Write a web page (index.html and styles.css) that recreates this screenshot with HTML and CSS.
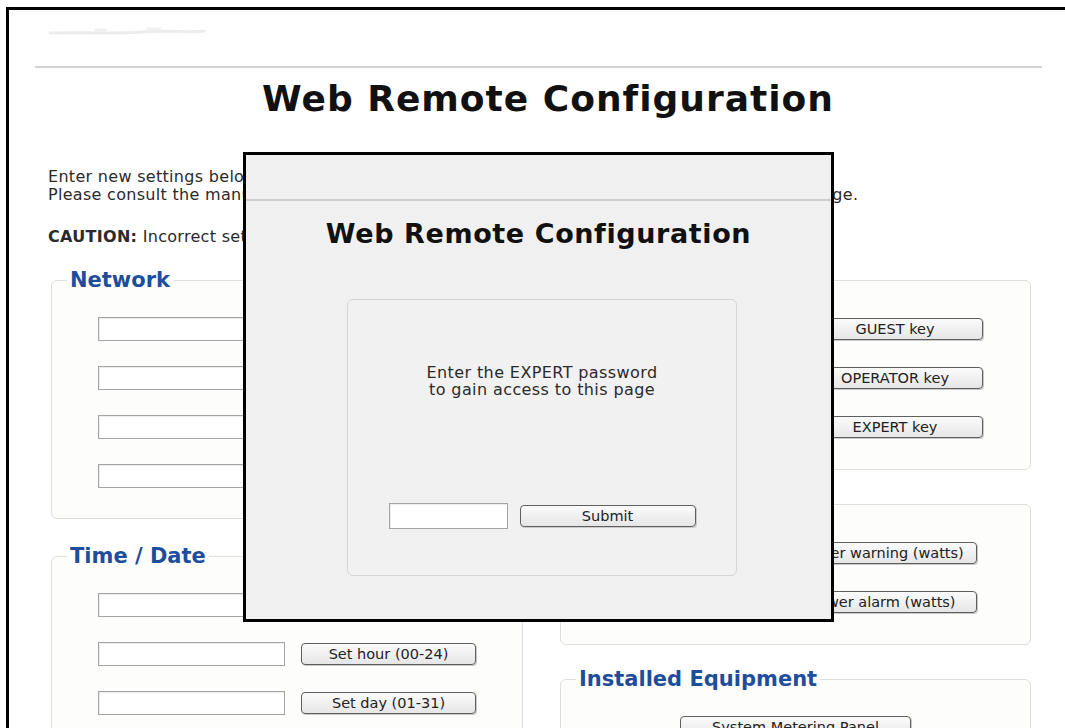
FILE: index.html
```html
<!DOCTYPE html>
<html lang="en">
<head>
<meta charset="utf-8">
<title>Web Remote Configuration</title>
<link rel="stylesheet" href="styles.css">
</head>
<body>
<div class="frame">
  <div class="brand">
    <svg width="160" height="12" viewBox="0 0 160 12" aria-hidden="true">
      <path d="M2 8 C 30 7, 60 9, 95 7 S 140 8, 156 6" fill="none" stroke="#ececec" stroke-width="3" stroke-linecap="round"/>
      <path d="M48 5 L 58 5 M 100 4 L 112 4" fill="none" stroke="#f1f1f1" stroke-width="3" stroke-linecap="round"/>
    </svg>
  </div>
  <hr class="rule">
  <h1 class="title">Web Remote Configuration</h1>

  <div class="intro">
    <p>Enter new settings below and press the matching button to apply each one.<br>
    <span class="nowrap">Please consult the manual for details before making further changes to the settings on this page.</span></p>
    <p><b>CAUTION:</b> Incorrect settings may cause the system to stop responding.</p>
  </div>

  <div class="columns">
    <div class="col col-left">
      <fieldset class="group">
        <legend>Network</legend>
        <div class="row"><input class="field" type="text"><button class="btn" type="button">Set IP address</button></div>
        <div class="row"><input class="field" type="text"><button class="btn" type="button">Set subnet mask</button></div>
        <div class="row"><input class="field" type="text"><button class="btn" type="button">Set gateway</button></div>
        <div class="row"><input class="field" type="text"><button class="btn" type="button">Set DNS server</button></div>
      </fieldset>
      <fieldset class="group">
        <legend>Time / Date</legend>
        <div class="row"><input class="field" type="text"><button class="btn" type="button">Set minute (00-59)</button></div>
        <div class="row"><input class="field" type="text"><button class="btn" type="button">Set hour (00-24)</button></div>
        <div class="row"><input class="field" type="text"><button class="btn" type="button">Set day (01-31)</button></div>
        <div class="row"><input class="field" type="text"><button class="btn" type="button">Set month (01-12)</button></div>
      </fieldset>
    </div>

    <div class="col">
      <fieldset class="group group-keys">
        <legend>Access Keys</legend>
        <div class="row"><input class="field" type="password"><button class="btn" type="button">GUEST key</button></div>
        <div class="row"><input class="field" type="password"><button class="btn" type="button">OPERATOR key</button></div>
        <div class="row"><input class="field" type="password"><button class="btn" type="button">EXPERT key</button></div>
      </fieldset>
      <fieldset class="group">
        <legend>Power Limits</legend>
        <div class="row"><input class="field field-short" type="text"><button class="btn btn-wide" type="button">Set power warning (watts)</button></div>
        <div class="row"><input class="field field-short" type="text"><button class="btn btn-wide" type="button">Set power alarm (watts)</button></div>
      </fieldset>
      <fieldset class="group">
        <legend>Installed Equipment</legend>
        <div class="row"><button class="btn btn-panel" type="button">System Metering Panel</button></div>
      </fieldset>
    </div>
  </div>

  <div class="modal">
    <hr class="modal-rule">
    <h2 class="modal-title">Web Remote Configuration</h2>
    <div class="login">
      <p class="login-text">Enter the EXPERT password<br>to gain access to this page</p>
      <div class="login-row">
        <input class="login-field" type="password">
        <button class="btn login-btn" type="button">Submit</button>
      </div>
    </div>
  </div>
</div>
</body>
</html>
```

FILE: styles.css
```css
html, body {
  margin: 0;
  padding: 0;
  background: #fff;
  overflow: hidden;
}

body {
  font-family: "DejaVu Sans", Verdana, sans-serif;
  color: #222;
}

.frame {
  position: relative;
  margin: 7px 0 0 6px;
  border-top: 3px solid #000;
  border-left: 3px solid #000;
  height: 718px;
  overflow: hidden;
}

.brand {
  margin: 15px 0 0 39px;
  height: 12px;
}

.brand svg {
  display: block;
}

.rule {
  margin: 29px 0 0 26px;
  width: 1007px;
  height: 2px;
  border: 0;
  background: #d2d2d2;
}

.title {
  margin: 11px 0 0;
  padding-left: 22px;
  font-size: 36px;
  line-height: 40px;
  font-weight: bold;
  letter-spacing: 1px;
  text-align: center;
  color: #111;
}

.intro {
  margin: 49px 0 0 39px;
  font-size: 16px;
  line-height: 18px;
  letter-spacing: 0.3px;
  color: #2a2a2a;
}

.intro p {
  margin: 0;
}

.intro p + p {
  margin-top: 24px;
}

.nowrap {
  white-space: nowrap;
}

.columns {
  display: grid;
  grid-template-columns: 472px 471px;
  column-gap: 37px;
  margin: 22px 0 0 42px;
}

.col {
  display: flex;
  flex-direction: column;
  gap: 22px;
}

.col-left {
  gap: 25px;
}

.group {
  box-sizing: border-box;
  width: 100%;
  min-inline-size: 0;
  margin: 0;
  padding: 25px 0 30px;
  border: 1px solid #dededb;
  border-radius: 6px;
  background: #fdfdfb;
}

.group-keys {
  padding-right: 4px;
}

.group legend {
  margin-left: 15px;
  padding: 0 3px;
  font-size: 21px;
  line-height: 24px;
  font-weight: bold;
  color: #1d4e9c;
}

.row {
  display: flex;
  justify-content: center;
  align-items: center;
  gap: 16px;
}

.row + .row {
  margin-top: 25px;
}

.field {
  box-sizing: border-box;
  width: 187px;
  height: 24px;
  margin: 0;
  border: 1px solid #a4a4a4;
  box-shadow: inset 1px 1px 0 #ececec;
  background: #fff;
}

.field-short {
  width: 122px;
}

.btn {
  box-sizing: border-box;
  width: 175px;
  height: 22px;
  margin: 0;
  padding: 0;
  border: 1px solid #5f5f5f;
  border-radius: 4px;
  background: linear-gradient(#fbfbfb, #e6e6e6);
  box-shadow: 1px 1px 0 #c9c9c9;
  font-family: "DejaVu Sans", Verdana, sans-serif;
  font-size: 14.5px;
  white-space: nowrap;
  color: #222;
}

.btn-wide {
  width: 225px;
  padding-left: 7px;
}

.btn-panel {
  width: 231px;
}

.modal {
  position: absolute;
  left: 234px;
  top: 142px;
  width: 591px;
  height: 470px;
  box-sizing: border-box;
  border: 3px solid #000;
  background: #f0f0f0;
}

.modal-rule {
  margin: 44px 0 0;
  height: 2px;
  border: 0;
  background: #cdcdcd;
}

.modal-title {
  margin: 17px 0 0;
  font-size: 27px;
  line-height: 32px;
  font-weight: bold;
  letter-spacing: 0.6px;
  text-align: center;
  color: #111;
}

.login {
  box-sizing: border-box;
  width: 390px;
  height: 277px;
  margin: 49px 0 0 101px;
  padding-top: 64px;
  border: 1px solid #d6d6d6;
  border-radius: 6px;
  background: #f1f1f1;
}

.login-text {
  margin: 0;
  font-size: 16px;
  line-height: 17px;
  letter-spacing: 0.4px;
  text-align: center;
  color: #2a2a2a;
}

.login-row {
  display: flex;
  justify-content: center;
  align-items: center;
  gap: 12px;
  margin-top: 105px;
}

.login-field {
  box-sizing: border-box;
  width: 119px;
  height: 26px;
  margin: 0;
  border: 1px solid #a4a4a4;
  box-shadow: inset 1px 1px 0 #ececec;
  background: #fff;
}

.login-btn {
  width: 176px;
}
```
